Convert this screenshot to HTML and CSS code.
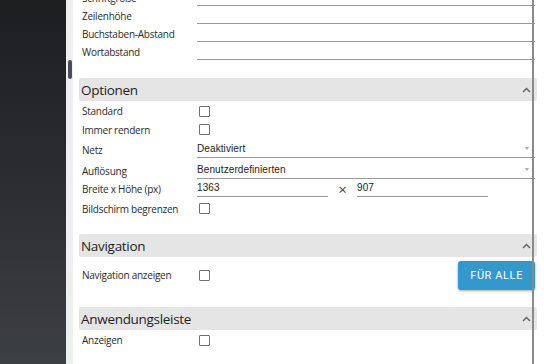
FILE: index.html
```html
<!DOCTYPE html>
<html lang="de">
<head>
    <meta charset="UTF-8">
    <meta name="viewport" content="width=device-width, initial-scale=1.0">
    <title>Einstellungen</title>
    <link rel="stylesheet" href="styles.css">
</head>
<body>
    <div class="sidebar"></div>
    <div class="scroll-track"><div class="scroll-thumb"></div></div>
    <div class="main-content">
        <div class="field-list top-list">
            <div class="field field-bottom"><span class="field-label">Schriftgröße</span><span class="field-input"></span></div>
            <div class="field field-bottom"><span class="field-label">Zeilenhöhe</span><span class="field-input"></span></div>
            <div class="field field-bottom"><span class="field-label">Buchstaben-Abstand</span><span class="field-input"></span></div>
            <div class="field field-bottom"><span class="field-label">Wortabstand</span><span class="field-input"></span></div>
        </div>

        <div class="section">
            <div class="section-head">
                <span>Optionen</span>
                <svg class="chevron" width="9" height="6" viewBox="0 0 9 6"><polyline points="1,5 4.5,1.5 8,5" fill="none" stroke="#666" stroke-width="1.5"/></svg>
            </div>
            <div class="field row-20"><span class="field-label">Standard</span><span class="checkbox"></span></div>
            <div class="field row-17"><span class="field-label">Immer rendern</span><span class="checkbox"></span></div>
            <div class="field field-bottom row-20">
                <span class="field-label">Netz</span>
                <span class="field-input select">Deaktiviert<span class="caret"></span></span>
            </div>
            <div class="field field-bottom row-21">
                <span class="field-label">Auflösung</span>
                <span class="field-input select">Benutzerdefinierten<span class="caret"></span></span>
            </div>
            <div class="field field-bottom row-18">
                <span class="field-label">Breite x Höhe (px)</span>
                <span class="field-input size-input">1363</span>
                <span class="times">×</span>
                <span class="field-input size-input">907</span>
            </div>
            <div class="field row-23"><span class="field-label">Bildschirm begrenzen</span><span class="checkbox"></span></div>
        </div>

        <div class="section">
            <div class="section-head">
                <span>Navigation</span>
                <svg class="chevron" width="9" height="6" viewBox="0 0 9 6"><polyline points="1,5 4.5,1.5 8,5" fill="none" stroke="#666" stroke-width="1.5"/></svg>
            </div>
            <div class="field row-36">
                <span class="field-label">Navigation anzeigen</span>
                <span class="checkbox"></span>
                <button type="button" class="all-btn">FÜR ALLE</button>
            </div>
        </div>

        <div class="section">
            <div class="section-head">
                <span>Anwendungsleiste</span>
                <svg class="chevron" width="9" height="6" viewBox="0 0 9 6"><polyline points="1,5 4.5,1.5 8,5" fill="none" stroke="#666" stroke-width="1.5"/></svg>
            </div>
            <div class="field row-20"><span class="field-label">Anzeigen</span><span class="checkbox"></span></div>
        </div>
    </div>
    <div class="divider"></div>
</body>
</html>
```

FILE: styles.css
```css
body {
    margin: 0;
    height: 364px;
    overflow: hidden;
    display: flex;
    background: #fff;
    font-family: 'Open Sans', 'Noto Sans', sans-serif;
    color: #2a2a2a;
    position: relative;
}
.sidebar {
    width: 66px;
    flex-shrink: 0;
    background: linear-gradient(180deg, #1d1e20 0%, #2b2d30 50%, #3c3f44 100%);
}
.scroll-track {
    width: 7px;
    flex-shrink: 0;
    background: #efefef;
}
.scroll-thumb {
    width: 4px;
    height: 19px;
    margin: 60px 0 0 2px;
    border-radius: 2px;
    background: #4a4b5b;
}
.main-content {
    flex: 1;
    padding: 0 7px 0 6px;
    margin-top: -12px;
}
.field {
    display: flex;
    align-items: center;
    height: 18px;
    font-size: 10px;
    letter-spacing: -0.25px;
}
.field-bottom {
    align-items: flex-end;
}
.field-label {
    width: 115px;
    padding-left: 3px;
    flex-shrink: 0;
    line-height: 14px;
}
.top-list .field-label {
    line-height: 13px;
}
.field-bottom .field-label {
    padding-bottom: 1px;
}
.field-input {
    flex: 1;
    align-self: stretch;
    border-bottom: 1px solid #999;
    margin-right: 2px;
}
.select, .size-input {
    display: flex;
    align-items: flex-end;
    padding-bottom: 1px;
    font-family: 'Liberation Sans', Arial, sans-serif;
    letter-spacing: 0.1px;
    line-height: 14px;
    color: #222;
}
.select {
    justify-content: space-between;
    padding-right: 6px;
}
.caret {
    width: 0;
    height: 0;
    margin-bottom: 6px;
    border-left: 2.5px solid transparent;
    border-right: 2.5px solid transparent;
    border-top: 3px solid #aaa;
}
.size-input {
    flex: none;
    width: 131px;
    margin-right: 0;
}
.times {
    width: 29px;
    text-align: center;
    font-size: 15px;
    line-height: 16px;
    color: #444;
}
.checkbox {
    width: 9px;
    height: 9px;
    margin-left: 2px;
    border: 1px solid #707070;
    border-radius: 1px;
    background: #fff;
}
.row-17 { height: 17px; }
.row-18 { height: 18px; }
.row-20 { height: 20px; }
.row-21 { height: 21px; }
.row-23 { height: 23px; }
.row-36 { height: 36px; }
.section {
    margin-top: 18px;
}
.section + .section {
    margin-top: 14px;
}
.section-head {
    display: flex;
    justify-content: space-between;
    align-items: center;
    height: 23px;
    padding: 0 6px 0 2px;
    background: #e5e5e5;
    border-radius: 2px 3px 3px 2px;
    font-size: 13.5px;
    letter-spacing: -0.3px;
    color: #1e1e1e;
}
.all-btn {
    margin-left: auto;
    margin-right: 2px;
    height: 29px;
    padding: 0 12px;
    border: none;
    border-radius: 3px;
    background: #3399cc;
    color: #fff;
    font-family: Roboto, 'Liberation Sans', sans-serif;
    font-size: 11px;
    letter-spacing: 0.6px;
    box-shadow: 0 1px 3px rgba(0,0,0,0.35);
}
.divider {
    position: absolute;
    top: 0;
    bottom: 0;
    left: 532px;
    width: 2px;
    background: #8a8a8a;
}
```
